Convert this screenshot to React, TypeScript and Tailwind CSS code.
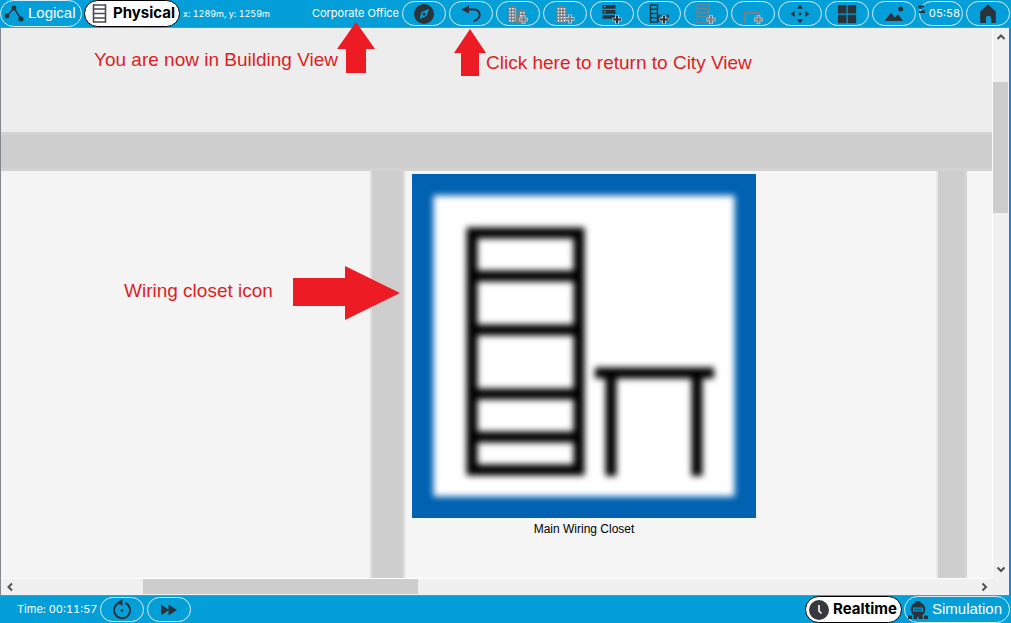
import type { ReactNode } from 'react';

const INK = '#2b333a';

function ToolButton({ label, children }: { label: string; children: ReactNode }) {
  return (
    <button
      type="button"
      aria-label={label}
      className="flex h-[25px] w-11 shrink-0 items-center justify-center rounded-full border border-[#d5effa]"
    >
      {children}
    </button>
  );
}

function Icon({ children }: { children: ReactNode }) {
  return (
    <svg viewBox="12 2 20 20" className="size-5 shrink-0 overflow-visible" fill="none" aria-hidden="true">
      {children}
    </svg>
  );
}

function Plus({ x, y, color = '#7a7f83' }: { x: number; y: number; color?: string }) {
  return (
    <>
      <path d={`M${x - 4.5} ${y}h9M${x} ${y - 4.5}v9`} stroke="#c5d5dc" strokeWidth="3.6" />
      <path d={`M${x - 4} ${y}h8M${x} ${y - 4}v8`} stroke={color} strokeWidth="2" />
    </>
  );
}

function Windows({ x, y, cols, rows }: { x: number; y: number; cols: number; rows: number }) {
  const cells: ReactNode[] = [];
  for (let r = 0; r < rows; r++) {
    for (let c = 0; c < cols; c++) {
      cells.push(<rect key={`${r}-${c}`} x={x + c * 3} y={y + r * 3} width="1.5" height="1.5" fill="#f2f6f8" />);
    }
  }
  return <>{cells}</>;
}

function TopBar() {
  return (
    <header className="flex h-7 shrink-0 items-center justify-between border-b border-[#6f8f9f] bg-[#049fd9] text-white">
      <div className="flex items-center gap-[2px]">
        <button type="button" className="flex h-[27px] w-[82px] items-center gap-1 rounded-full border border-[#d5effa] pl-[3px] font-['Liberation_Sans',Arial,sans-serif] text-[15px]">
          <svg viewBox="4 4 20 18" className="h-[18px] w-5 shrink-0" aria-hidden="true">
            <path d="M7 15L14 7L21 18" fill="none" stroke={INK} strokeWidth="1.4" />
            <circle cx="7" cy="15" r="2.4" fill={INK} />
            <circle cx="14" cy="7" r="2.4" fill={INK} />
            <circle cx="21" cy="18" r="2.6" fill={INK} />
          </svg>
          Logical
        </button>
        <button type="button" className="flex h-[27px] w-[96px] items-center gap-[6px] rounded-full border border-black bg-white pl-[7px] text-[15px] font-bold text-black">
          <svg viewBox="0 0 15 19" className="h-[19px] w-[15px] shrink-0" aria-hidden="true">
            <path d="M1.500 .5v18M13.500 .5v18" stroke="#4a4a50" strokeWidth="1.6" />
            <path d="M1 1h13M1 5h13M1 9.500h13M1 14h13M1 18h13" stroke="#4a4a50" strokeWidth="1.300" />
          </svg>
          Physical
        </button>
        <span className="pl-[1px] text-[9px] tabular-nums">x: 1289m, y: 1259m</span>
      </div>
      <div className="flex items-center gap-[3px] pr-px">
        <span className="text-[11px]">Corporate Office</span>
        <ToolButton label="Navigation">
          <Icon>
            <circle cx="22" cy="12" r="10" fill={INK} />
            <path d="M27 7L24.500 14L17.500 17L19.500 10Z" fill="#049fd9" />
            <circle cx="22" cy="12" r="1.600" fill={INK} />
          </Icon>
        </ToolButton>
        <ToolButton label="Back">
          <Icon>
            <path d="M19 7.500h6.500a5.200 5.200 0 0 1 3.500 9q-1 1.800-4.500 2.700" stroke={INK} strokeWidth="1.900" />
            <path d="M12 7.500L20 3.500V11.500Z" fill={INK} />
          </Icon>
        </ToolButton>
        <ToolButton label="New city">
          <Icon>
            <path d="M12.500 4.500h2.500V3h3v1.500h2.500V20.500h-8ZM22.500 8.500h1.500V7h4v1.500h2V21h-9.500V13h2Z" fill="#7a7f83" />
            <Windows x={13.200} y={6} cols={2} rows={5} />
            <rect x="18.800" y="6" width="1" height="13" fill="#a9b6bd" />
            <Windows x={24} y={10} cols={2} rows={3} />
            <Plus x={27.500} y={17.500} />
          </Icon>
        </ToolButton>
        <ToolButton label="New building">
          <Icon>
            <path d="M13.500 5h2V3h5.500v2h2.500V20.500h-10Z" fill="#7a7f83" />
            <Windows x={14.700} y={6} cols={3} rows={5} />
            <Plus x={27} y={17} />
          </Icon>
        </ToolButton>
        <ToolButton label="New closet">
          <Icon>
            <path d="M12.500 3h13v3.700h-13ZM12.500 8h13v3.700h-13ZM12.500 13h13v3.700h-13Z" fill={INK} />
            <path d="M14 4.800h1.500M14 9.800h1.500" stroke="#8fb8cc" />
            <Plus x={27} y={17.500} color={INK} />
          </Icon>
        </ToolButton>
        <ToolButton label="New rack and table">
          <Icon>
            <path d="M13.500 3h7v17h-7ZM13.500 7.200h7M13.500 11.500h7M13.500 15.800h7" stroke={INK} strokeWidth="1.400" />
            <path d="M21 13.500h10.500M31 13v7M22 13v7" stroke={INK} strokeWidth="1.700" />
            <Plus x={27} y={17.500} color={INK} />
          </Icon>
        </ToolButton>
        <ToolButton label="New rack">
          <Icon>
            <path d="M13 2.500h12v18h-12ZM13 6.500h12M13 10.500h12M13 14.500h12" stroke="#6b8594" strokeWidth="1.200" />
            <Plus x={27} y={17.500} />
          </Icon>
        </ToolButton>
        <ToolButton label="New table">
          <Icon>
            <path d="M12 11h17M14 11v10M28 11v8" stroke="#7a7f83" strokeWidth="2" />
            <Plus x={27.500} y={17.500} />
          </Icon>
        </ToolButton>
        <ToolButton label="Move object">
          <Icon>
            <path d="M22 2.500l3 4.200h-6ZM22 21.500l3-4.200h-6ZM12.500 12l4.200-3v6ZM31.500 12l-4.200-3v6Z" fill={INK} />
            <circle cx="22" cy="12" r="1.400" fill={INK} />
          </Icon>
        </ToolButton>
        <ToolButton label="Grid">
          <Icon>
            <path d="M13 3h8.500v8.500H13ZM22.700 3h8.500v8.500h-8.500ZM13 12.700h8.500v8.500H13ZM22.700 12.700h8.500v8.500h-8.500Z" fill={INK} />
          </Icon>
        </ToolButton>
        <ToolButton label="Set background">
          <Icon>
            <path d="M12.500 19L19 10.700L23 15.500L26 12L31 19Z" fill={INK} />
            <circle cx="28.700" cy="7" r="2.500" fill={INK} />
          </Icon>
        </ToolButton>
        <div className="relative">
          <button type="button" className="flex h-[25px] w-11 items-center justify-center rounded-full border border-[#d5effa] pl-[7px] text-[11px] tabular-nums">
            05:58
          </button>
          <svg viewBox="0 0 8 9" className="absolute top-1 -left-px h-[9px] w-2" aria-hidden="true">
            <path d="M0 1.500h6M1 7h6M2.500 1.500v2.500M5.500 5v3" stroke={INK} strokeWidth="1.800" />
          </svg>
        </div>
        <ToolButton label="Home">
          <Icon>
            <path d="M22 2.500L29.800 9.500V21H25v-5.500a1.500 1.500 0 0 0-1.500-1.500h-2a1.500 1.500 0 0 0-1.500 1.500V21h-5.800V9.500Z" fill={INK} />
          </Icon>
        </ToolButton>
      </div>
    </header>
  );
}

function ClosetIcon() {
  return (
    <svg viewBox="0 0 344 344" className="size-[344px]" role="img" aria-label="Main Wiring Closet">
      <defs>
        <filter id="soft" x="-10%" y="-10%" width="120%" height="120%" colorInterpolationFilters="sRGB">
          <feGaussianBlur stdDeviation="3" />
        </filter>
      </defs>
      <rect width="344" height="344" fill="#0062b1" />
      <rect x="21.500" y="21.500" width="301" height="301" fill="#fff" filter="url(#soft)" />
      <g stroke="#000" strokeWidth="11" fill="none" filter="url(#soft)">
        <path d="M60 59H167V296H60ZM60 102H167M60 156H167M60 220H167M60 263H167" />
        <path d="M183 199H302M199 199V302M285 199V302" />
      </g>
    </svg>
  );
}

function Annotations() {
  return (
    <div className="pointer-events-none absolute inset-0 text-[19px] leading-6 whitespace-nowrap text-[#dc1f26]">
      <p className="absolute top-5 left-[93px]">You are now in Building View</p>
      <p className="absolute top-[23px] left-[485px]">Click here to return to City View</p>
      <p className="absolute top-[251px] left-[123px]">Wiring closet icon</p>
      <svg viewBox="0 0 38 51" className="absolute -top-[6px] left-[336px] h-[51px] w-[38px]" aria-hidden="true">
        <path d="M19 0L38 27H29V51H9V27H0Z" fill="#ed1c24" />
      </svg>
      <svg viewBox="0 0 32 47" className="absolute top-px left-[453px] h-[47px] w-8" aria-hidden="true">
        <path d="M16 0L32 24H25V47H7V24H0Z" fill="#ed1c24" />
      </svg>
      <svg viewBox="0 0 107 54" className="absolute top-[238px] left-[292px] h-[54px] w-[107px]" aria-hidden="true">
        <path d="M0 12H52V0L107 27L52 54V40H0Z" fill="#ed1c24" />
      </svg>
    </div>
  );
}

function Chevron({ d }: { d: string }) {
  return (
    <svg viewBox="0 0 10 10" className="size-[10px]" fill="none" aria-hidden="true">
      <path d={d} stroke="#505050" strokeWidth="2" />
    </svg>
  );
}

function Workspace() {
  return (
    <main className="flex min-h-0 flex-1 flex-col border-l border-[#828790] font-['Liberation_Sans',Arial,sans-serif]">
      <div className="flex min-h-0 flex-1">
        <div className="relative flex min-w-0 flex-1 flex-col bg-[#cecece]">
          <div className="h-[104px] shrink-0 bg-[#ededed]" />
          <div className="h-[39px] shrink-0 border-y-[3px] border-[#d3d3d3]" />
          <div className="flex min-h-0 flex-1">
            <div className="w-[371px] shrink-0 border-r-2 border-[#e0e0e0] bg-[#f4f4f4]" />
            <div className="w-8 shrink-0 border-r-2 border-[#d5d5d5]" />
            <div className="flex min-w-0 flex-1 overflow-hidden border-x-2 border-[#e8e8e8] bg-[#f5f5f5] pt-[3px] pl-[6px]">
              <figure className="flex w-[344px] shrink-0 flex-col items-center">
                <ClosetIcon />
                <figcaption className="pt-[3px] text-xs leading-4 text-black">Main Wiring Closet</figcaption>
              </figure>
            </div>
            <div className="w-[29px] shrink-0 border-r-[3px] border-[#d5d5d5]" />
            <div className="w-[25px] shrink-0 bg-[#f5f5f5]" />
          </div>
          <Annotations />
        </div>
        <div className="flex w-[17px] shrink-0 flex-col items-center justify-between border-l border-white bg-[#f0f0f0]">
          <button type="button" aria-label="Scroll up" className="flex h-[18px] items-center">
            <Chevron d="M1.500 7L5 3.500L8.500 7" />
          </button>
          <div className="flex w-full flex-1 flex-col pt-9">
            <div className="h-[131px] w-[15px] bg-[#cdcdcd]" />
          </div>
          <button type="button" aria-label="Scroll down" className="flex h-[18px] items-center">
            <Chevron d="M1.500 3.500L5 7L8.500 3.500" />
          </button>
        </div>
        <div className="w-[2px] shrink-0 bg-[#1f86d2]" />
      </div>
      <div className="flex h-[18px] shrink-0">
        <div className="flex min-w-0 flex-1 items-center justify-between border-t border-b border-t-white border-b-[#828790] bg-[#f0f0f0]">
          <button type="button" aria-label="Scroll left" className="flex w-[17px] justify-center">
            <Chevron d="M7 1.500L3.500 5L7 8.500" />
          </button>
          <div className="flex h-full flex-1 pl-[125px]">
            <div className="h-[15px] w-[275px] bg-[#cdcdcd]" />
          </div>
          <button type="button" aria-label="Scroll right" className="flex w-[17px] justify-center">
            <Chevron d="M3.500 1.500L7 5L3.500 8.500" />
          </button>
        </div>
        <div className="w-[17px] shrink-0 border-b border-[#828790] bg-[#f0f0f0]" />
        <div className="w-[2px] shrink-0 bg-[#1f86d2]" />
      </div>
    </main>
  );
}

function BottomBar() {
  return (
    <footer className="flex h-[27px] shrink-0 items-center justify-between bg-[#049fd9] text-white">
      <div className="flex items-center gap-[3px] pl-[17px]">
        <span className="text-[11px] tabular-nums">Time: 00:11:57</span>
        <ToolButton label="Power cycle devices">
          <Icon>
            <path d="M20 4.500A8 8 0 1 0 25 4.800" stroke={INK} strokeWidth="1.900" />
            <path d="M17 4.500L22.500 1V8Z" fill={INK} />
            <circle cx="22" cy="12.500" r="1.300" fill={INK} />
          </Icon>
        </ToolButton>
        <ToolButton label="Fast forward">
          <Icon>
            <path d="M14 6.500L22 12L14 17.500ZM21.500 6.500L30 12L21.500 17.500Z" fill={INK} />
          </Icon>
        </ToolButton>
      </div>
      <div className="flex items-center gap-[2px] pr-px">
        <button type="button" className="flex h-[27px] w-[97px] items-center gap-1 rounded-full border border-black bg-white pl-[3px] text-[15px] font-bold text-black">
          <svg viewBox="0 0 20 20" className="size-5 shrink-0" aria-hidden="true">
            <circle cx="10" cy="10" r="10" fill="#38383d" />
            <path d="M10 5v6l2.500 2.500" fill="none" stroke="#fff" strokeWidth="1.600" />
          </svg>
          Realtime
        </button>
        <button type="button" className="flex h-[27px] w-[106px] items-center gap-1 rounded-full border border-[#d5effa] pl-[3px] font-['Liberation_Sans',Arial,sans-serif] text-[15px]">
          <svg viewBox="0 0 20 18" className="h-[18px] w-5 shrink-0" aria-hidden="true">
            <path d="M7.500 0h5v2h-5Z" fill={INK} />
            <circle cx="10" cy="8.500" r="7.300" fill={INK} />
            <path d="M5 6.500h10v4h-10Z" fill="#049fd9" />
            <path d="M6 8.500h8" stroke={INK} strokeWidth="1.500" />
            <path d="M0 14.500h4v3.500h-4ZM5.300 14.500h4v3.500h-4ZM10.700 14.500h4v3.500h-4ZM16 14.500h4v3.500h-4Z" fill={INK} />
          </svg>
          Simulation
        </button>
      </div>
    </footer>
  );
}

export default function App() {
  return (
    <div className="flex h-screen flex-col overflow-hidden bg-[#049fd9] font-[Inter,sans-serif] whitespace-nowrap">
      <TopBar />
      <Workspace />
      <BottomBar />
    </div>
  );
}
